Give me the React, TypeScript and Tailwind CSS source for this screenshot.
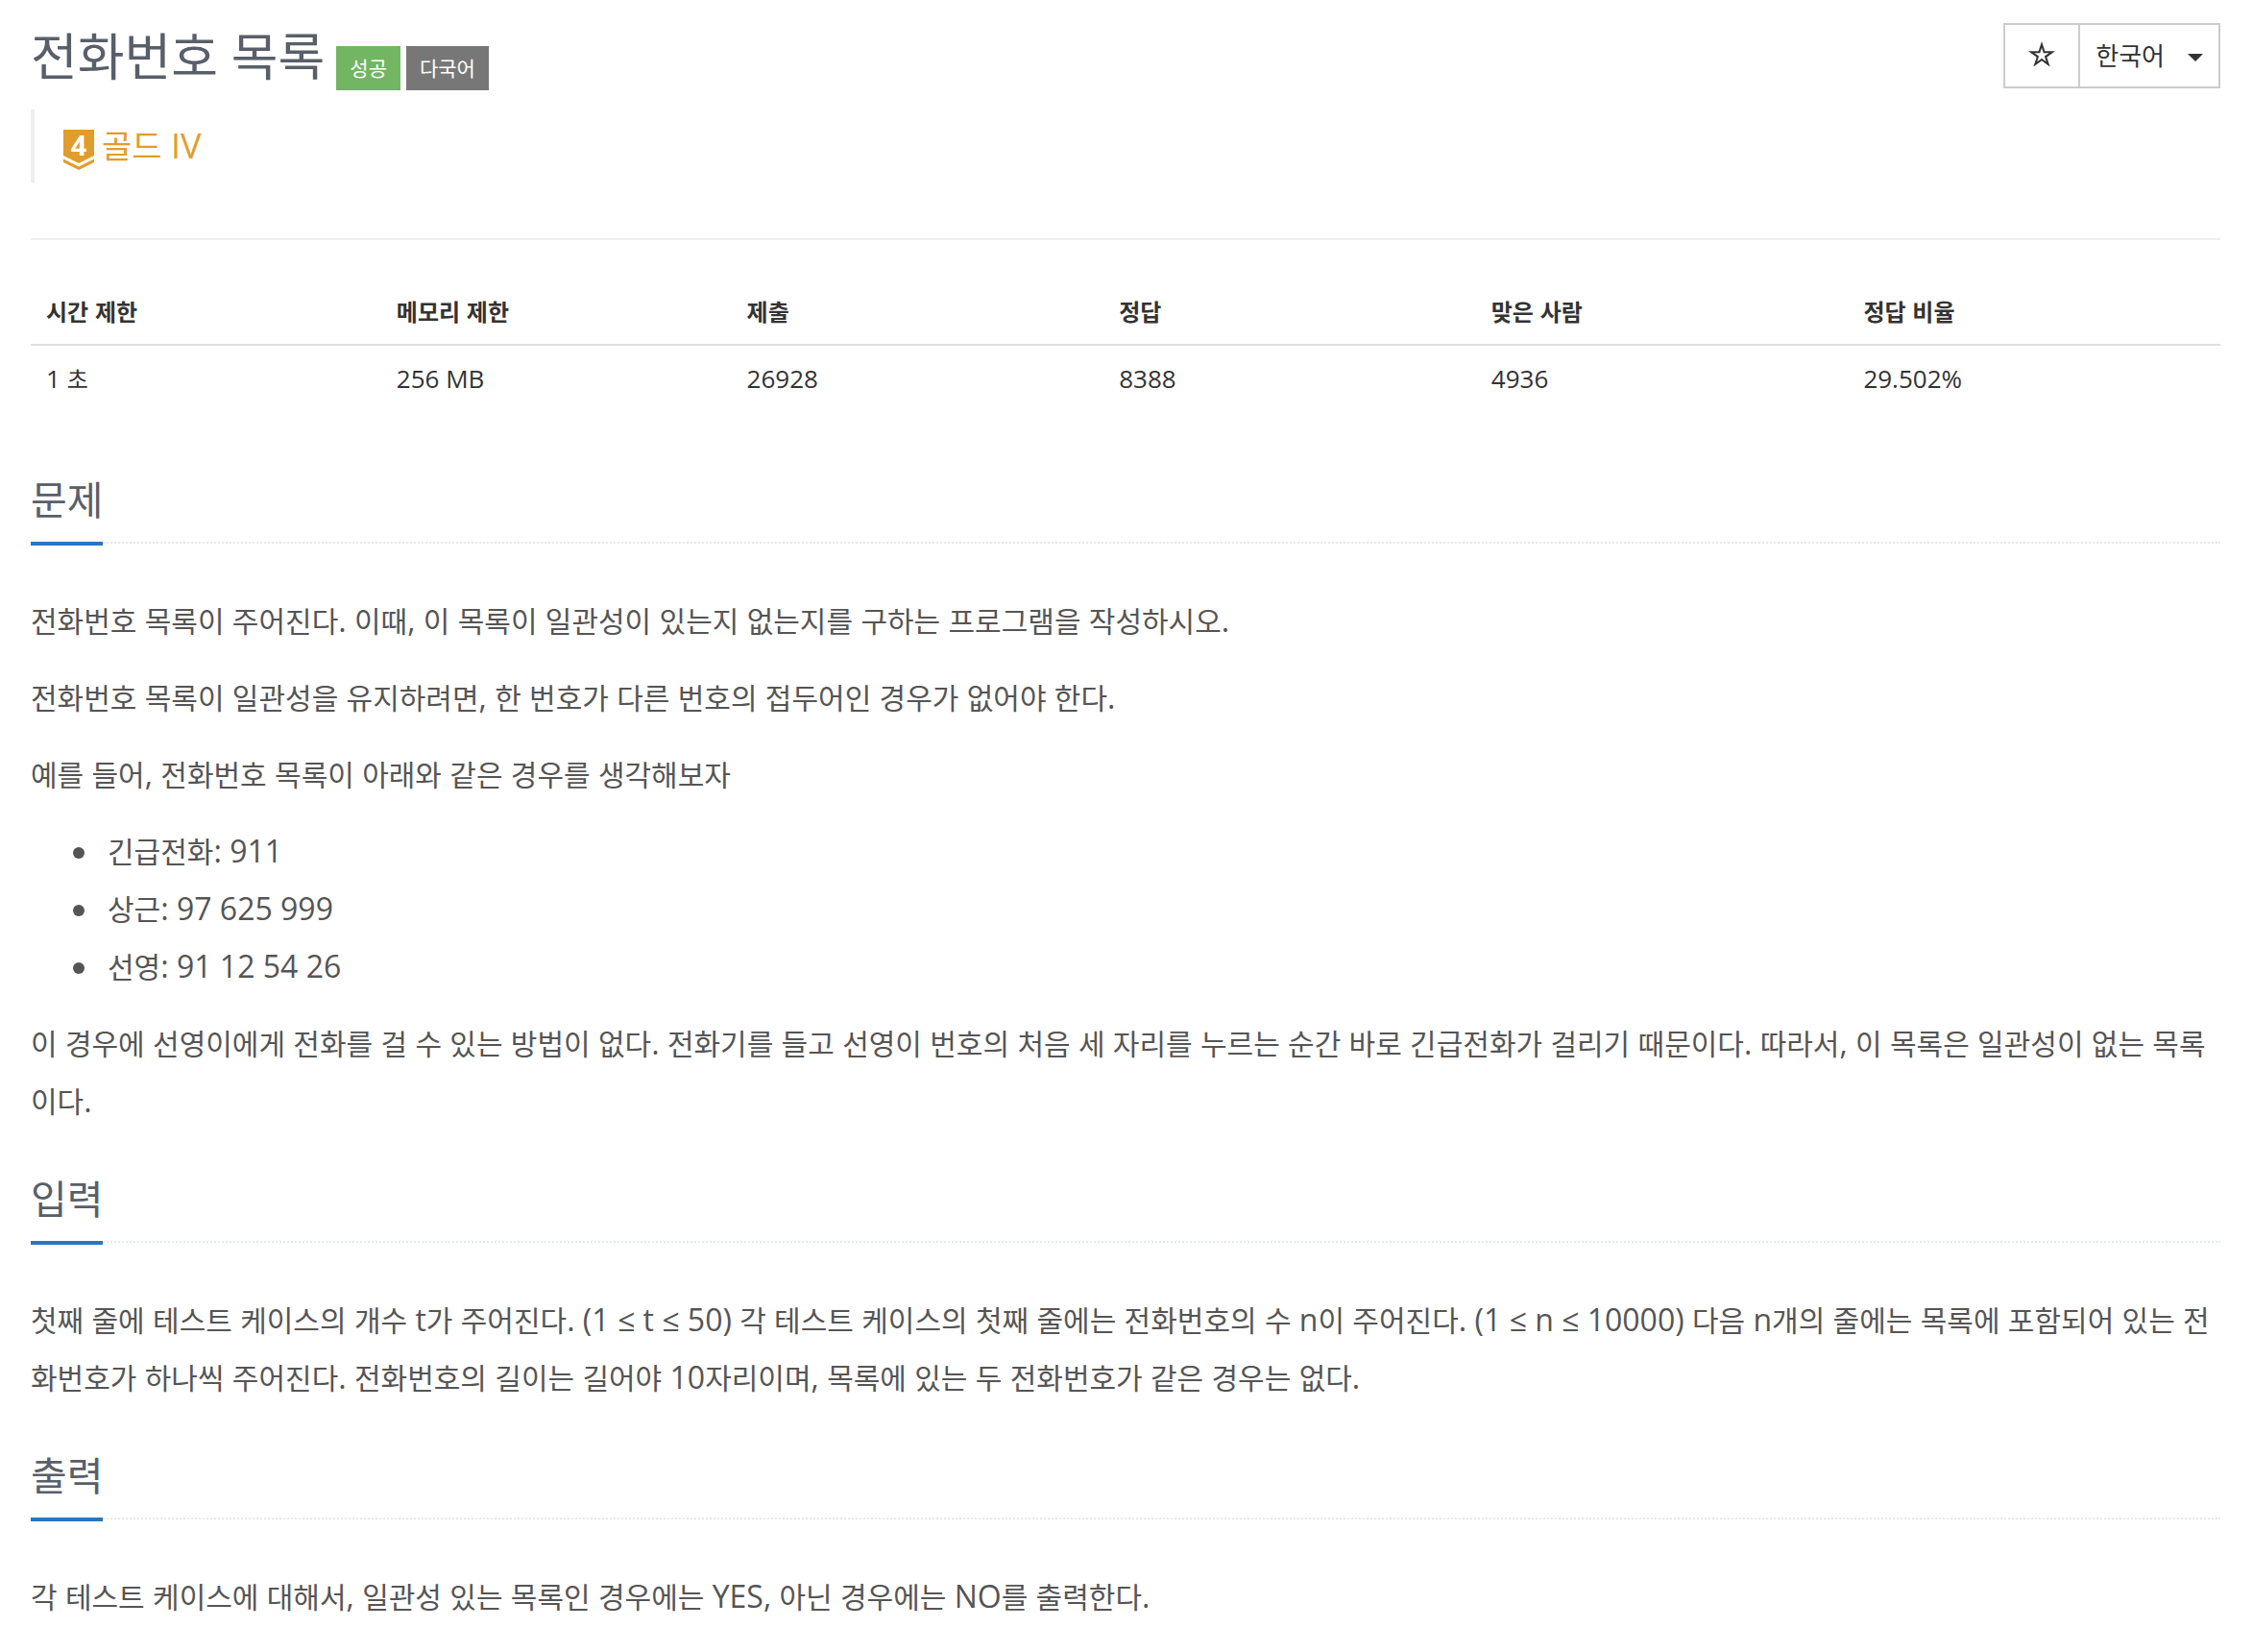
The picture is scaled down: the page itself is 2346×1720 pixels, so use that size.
import type { ReactNode } from "react";

const limits = [
  { label: "시간 제한", value: "1 초", width: "w-[16%]" },
  { label: "메모리 제한", value: "256 MB", width: "w-[16%]" },
  { label: "제출", value: "26928", width: "w-[17%]" },
  { label: "정답", value: "8388", width: "w-[17%]" },
  { label: "맞은 사람", value: "4936", width: "w-[17%]" },
  { label: "정답 비율", value: "29.502%", width: "w-[17%]" },
];

const phoneBooks = ["긴급전화: 911", "상근: 97 625 999", "선영: 91 12 54 26"];

// Hangul is set a little smaller than the Latin text around it
const Mixed = ({ text, hangul }: { text: string; hangul: string }) => (
  <>
    {text.split(/([가-힣]+)/).map((part, i) =>
      i % 2 === 1 ? (
        <span key={i} className={`${hangul} leading-none`}>
          {part}
        </span>
      ) : (
        part
      )
    )}
  </>
);

const TierIcon = () => (
  <svg
    viewBox="0 0 32 42"
    className="mt-2 h-[42px] w-8 overflow-visible"
    aria-hidden="true"
  >
    <path d="M0 0h32v27l-16 8-16-8z" fill="#e19d2b" />
    <path d="M0 30.5l16 8 16-8V34l-16 8-16-8z" fill="#e19d2b" />
    <text
      x="16"
      y="26.5"
      textAnchor="middle"
      fontFamily="Open Sans"
      fontWeight="700"
      fontSize="29"
      fill="#fff"
    >
      4
    </text>
  </svg>
);

const StarIcon = () => (
  <svg viewBox="0 0 28 27" className="mb-1 h-[27px] w-7" aria-hidden="true">
    <path
      fillRule="evenodd"
      d="M14 0l3.3 10.2H28l-8.7 6.2 3.3 10.2-8.6-6.3-8.6 6.3 3.3-10.2L0 10.2h10.7zM14 6.7l-1.8 5.5H6.4l4.7 3.4-1.8 5.6 4.7-3.4 4.7 3.4-1.8-5.6 4.7-3.4h-5.8z"
      fill="#333"
    />
  </svg>
);

const Paragraph = ({ text }: { text: string }) => (
  <p>
    <Mixed text={text} hangul="text-[30px]" />
  </p>
);

const Section = ({
  title,
  children,
}: {
  title: string;
  children: ReactNode;
}) => {
  return (
    <section className="mb-[38px]">
      <div className="flex border-b-2 border-dotted border-[#e4e9f0]">
        <h2 className="-mb-1 border-b-4 border-[#2a76bf] pb-[10px] text-[41px] leading-[68px] text-[#585f69]">
          {title}
        </h2>
      </div>
      <div className="flex flex-col gap-5 pt-[50px] text-[32px] leading-[60px] text-[#555]">
        {children}
      </div>
    </section>
  );
};

const App = () => {
  return (
    <main
      lang="ko"
      className="bg-white pt-6 pr-[34px] pb-8 pl-8 font-['Open_Sans','Noto_Sans_CJK_KR',sans-serif] text-[#333]"
    >
      <header className="flex items-start justify-between">
        <div className="flex items-end gap-[6px]">
          <h1 className="mr-[6px] text-[53px] leading-[70px] text-[#585f69]">
            전화번호 목록
          </h1>
          <span className="bg-[#72b562] px-[14px] text-[21px] leading-[46px] text-white">
            성공
          </span>
          <span className="bg-[#777] px-[14px] text-[21px] leading-[46px] text-white">
            다국어
          </span>
        </div>
        <div className="flex h-[68px] border-2 border-[#ccc]">
          <button
            type="button"
            aria-label="즐겨찾기"
            className="flex w-[76px] items-center justify-center"
          >
            <StarIcon />
          </button>
          <button
            type="button"
            className="flex items-center gap-6 border-l-2 border-[#ccc] px-4 text-[26px]"
          >
            한국어
            <svg viewBox="0 0 16 8" className="mt-1 h-2 w-4" aria-hidden="true">
              <path d="M0 0h16l-8 8z" fill="#333" />
            </svg>
          </button>
        </div>
      </header>

      <blockquote className="mt-5 flex h-[76px] items-center gap-2 border-l-4 border-[#eee] pl-[30px] text-4xl text-[#e19d2b]">
        <TierIcon />
        <a href="#tier">
          <Mixed text="골드 IV" hangul="text-[34px]" />
        </a>
      </blockquote>

      <hr className="mt-[58px] border-t-2 border-[#eee]" />

      <table className="mt-10 w-full table-fixed text-left text-[26px] leading-[36px]">
        <thead>
          <tr className="border-b-2 border-[#ddd]">
            {limits.map(({ label, width }) => (
              <th key={label} className={`${width} p-4 font-bold`}>
                <Mixed text={label} hangul="text-2xl" />
              </th>
            ))}
          </tr>
        </thead>
        <tbody>
          <tr>
            {limits.map(({ label, value }) => (
              <td key={label} className="p-4">
                <Mixed text={value} hangul="text-2xl" />
              </td>
            ))}
          </tr>
        </tbody>
      </table>

      <div className="mt-[58px]">
        <Section title="문제">
          <Paragraph text="전화번호 목록이 주어진다. 이때, 이 목록이 일관성이 있는지 없는지를 구하는 프로그램을 작성하시오." />
          <Paragraph text="전화번호 목록이 일관성을 유지하려면, 한 번호가 다른 번호의 접두어인 경우가 없어야 한다." />
          <Paragraph text="예를 들어, 전화번호 목록이 아래와 같은 경우를 생각해보자" />
          <ul className="pl-11">
            {phoneBooks.map((entry) => (
              <li
                key={entry}
                className="flex items-center before:mt-1 before:mr-6 before:size-3 before:rounded-full before:bg-[#555]"
              >
                <span>
                  <Mixed text={entry} hangul="text-[30px]" />
                </span>
              </li>
            ))}
          </ul>
          <Paragraph text="이 경우에 선영이에게 전화를 걸 수 있는 방법이 없다. 전화기를 들고 선영이 번호의 처음 세 자리를 누르는 순간 바로 긴급전화가 걸리기 때문이다. 따라서, 이 목록은 일관성이 없는 목록이다." />
        </Section>

        <Section title="입력">
          <Paragraph text="첫째 줄에 테스트 케이스의 개수 t가 주어진다. (1 ≤ t ≤ 50) 각 테스트 케이스의 첫째 줄에는 전화번호의 수 n이 주어진다. (1 ≤ n ≤ 10000) 다음 n개의 줄에는 목록에 포함되어 있는 전화번호가 하나씩 주어진다. 전화번호의 길이는 길어야 10자리이며, 목록에 있는 두 전화번호가 같은 경우는 없다." />
        </Section>

        <Section title="출력">
          <Paragraph text="각 테스트 케이스에 대해서, 일관성 있는 목록인 경우에는 YES, 아닌 경우에는 NO를 출력한다." />
        </Section>
      </div>
    </main>
  );
};

export default App;
